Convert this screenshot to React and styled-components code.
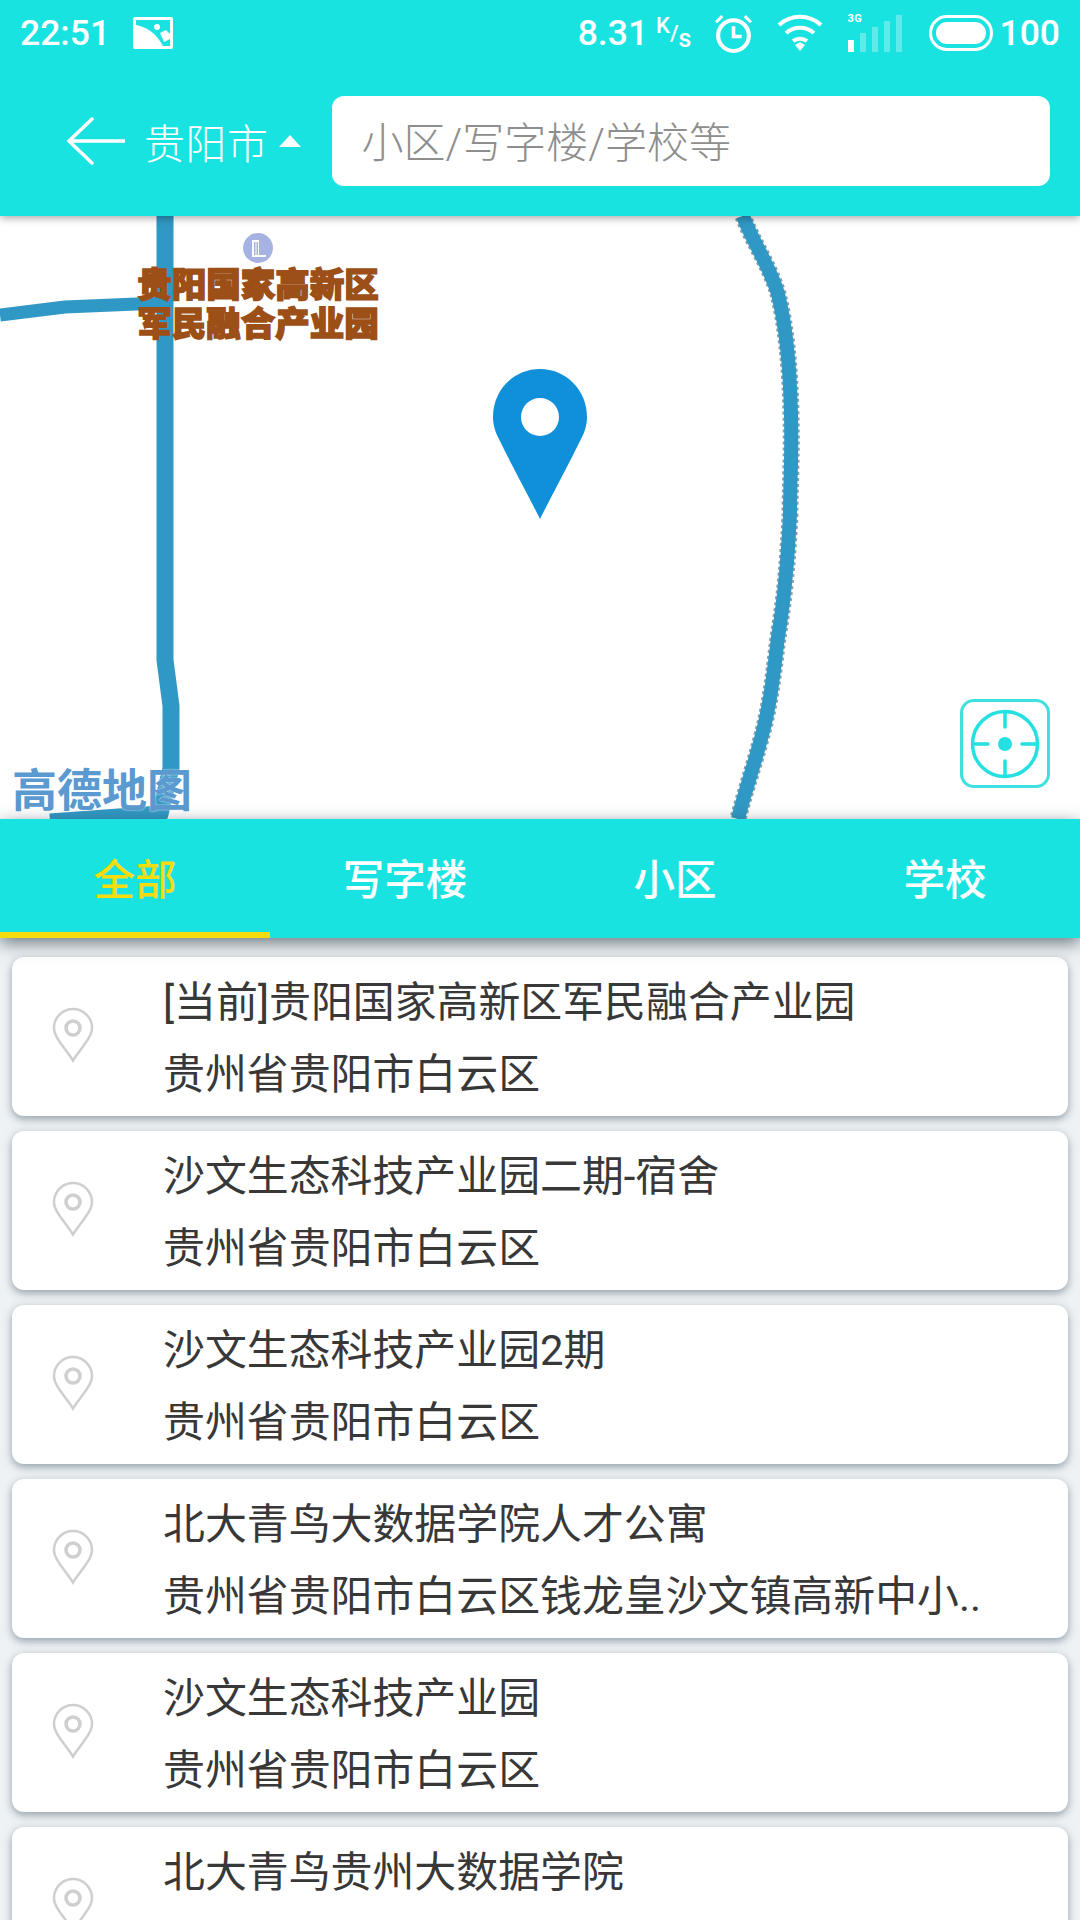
import React from "react";
import styled, { createGlobalStyle } from "styled-components";

const Global = createGlobalStyle`
  html, body { margin: 0; padding: 0; background: #fff; }
  * { box-sizing: border-box; }
  body { font-family: Roboto, "Noto Sans CJK SC", sans-serif; }
`;

const Page = styled.div`
  width: 1080px;
  height: 1920px;
  overflow: hidden;
  display: flex;
  flex-direction: column;
  background: #eef2f4;
`;

const Header = styled.header`
  position: relative;
  z-index: 3;
  flex: none;
  height: 216px;
  background: #19e3e0;
  box-shadow: 0 2px 8px rgba(0, 0, 0, 0.35);
`;

const StatusBar = styled.div`
  height: 66px;
  padding: 0 20px 0 20px;
  display: flex;
  align-items: center;
  justify-content: space-between;
  color: #fff;
  font-size: 35.5px;
`;

const StatusGroup = styled.div`
  display: flex;
  align-items: center;
`;

const Time = styled.span`
  margin-right: 23px;
  font-weight: 500;
`;

const Speed = styled.span`
  font-weight: 500;
  margin-right: 22px;
`;

const SpeedUnit = styled.span`
  display: inline-flex;
  align-items: center;
  margin: 0 22px 0 -14px;
  font-size: 22px;
  font-weight: 500;
  height: 40px;
`;

const Sup = styled.span`
  align-self: flex-start;
`;

const Sub = styled.span`
  align-self: flex-end;
  font-size: 25px;
`;

const IconGap = styled.span`
  width: ${(p) => p.$w}px;
`;

const SignalWrap = styled.div`
  position: relative;
  width: 55px;
  height: 40px;
  margin: 0 27px 0 24px;
`;

const SignalLabel = styled.span`
  position: absolute;
  left: 0;
  top: -1px;
  font-size: 11px;
  font-weight: 700;
  letter-spacing: 0.5px;
`;

const Battery = styled.span`
  font-weight: 500;
  margin-left: 6px;
`;

const Toolbar = styled.div`
  height: 90px;
  margin-top: 30px;
  padding: 0 30px 0 67px;
  display: flex;
  align-items: center;
  color: #fff;
`;

const City = styled.span`
  margin-left: 19px;
  font-size: 41px;
  font-weight: 300;
  letter-spacing: 0.5px;
`;

const Caret = styled.span`
  width: 0;
  height: 0;
  margin: 0 31px 0 10px;
  border-left: 11px solid transparent;
  border-right: 11px solid transparent;
  border-bottom: 12px solid #fff;
`;

const Search = styled.div`
  flex: 1;
  height: 90px;
  padding: 0 0 4px 30px;
  display: flex;
  align-items: center;
  background: #fff;
  border-radius: 12px;
  color: #8e8e8e;
  font-size: 42px;
  font-weight: 300;
`;

const MapArea = styled.div`
  position: relative;
  flex: none;
  height: 603px;
  background: #fff;
  overflow: hidden;
`;

const Roads = styled.svg`
  position: absolute;
  inset: 0;
`;

const PoiLabel = styled.div`
  position: absolute;
  left: 137px;
  top: 50px;
  width: 242px;
  color: #9c4f16;
  font-size: 34.5px;
  line-height: 39px;
  font-weight: 900;
  text-align: center;
  -webkit-text-stroke: 1.5px #9c4f16;
`;

const PoiDot = styled.svg`
  position: absolute;
  left: 243px;
  top: 17px;
`;

const Marker = styled.svg`
  position: absolute;
  left: 493px;
  top: 153px;
`;

const LocateButton = styled.div`
  position: absolute;
  left: 960px;
  top: 483px;
  width: 90px;
  height: 89px;
  display: flex;
  align-items: center;
  justify-content: center;
  background: #fff;
  border: 3px solid #3fe0e0;
  border-radius: 14px;
`;

const MapLogo = styled.div`
  position: absolute;
  left: 12px;
  top: 548px;
  color: #5b9ad0;
  font-size: 45px;
  line-height: 56px;
  font-weight: 700;
  text-shadow: 0 0 2px #fff;
`;

const Tabs = styled.nav`
  position: relative;
  z-index: 2;
  flex: none;
  height: 119px;
  display: grid;
  grid-template-columns: repeat(4, 1fr);
  background: #19e3e0;
  box-shadow: 0 5px 16px rgba(50, 70, 80, 0.7);
`;

const Tab = styled.div`
  display: flex;
  align-items: center;
  justify-content: center;
  padding-top: 2px;
  font-size: 41.5px;
  font-weight: 500;
  color: ${(p) => (p.$active ? "#f5dc0c" : "#fff")};
  border-bottom: 6px solid ${(p) => (p.$active ? "#f5dc0c" : "transparent")};
`;

const List = styled.div`
  padding: 19px 12px 0;
  display: flex;
  flex-direction: column;
  gap: 15px;
`;

const Card = styled.div`
  flex: none;
  height: 159px;
  padding-left: 40px;
  display: flex;
  align-items: center;
  background: #fff;
  border-radius: 12px;
  box-shadow: 0 3px 8px rgba(70, 90, 105, 0.55);
`;

const PinSlot = styled.div`
  display: flex;
  margin-top: -4px;
`;

const CardText = styled.div`
  margin-left: 69px;
  padding-top: 4px;
  font-size: 41.9px;
  line-height: 72px;
  font-weight: 400;
  color: #383838;
  white-space: nowrap;
`;

const places = [
  ["[当前]贵阳国家高新区军民融合产业园", "贵州省贵阳市白云区"],
  ["沙文生态科技产业园二期-宿舍", "贵州省贵阳市白云区"],
  ["沙文生态科技产业园2期", "贵州省贵阳市白云区"],
  ["北大青鸟大数据学院人才公寓", "贵州省贵阳市白云区钱龙皇沙文镇高新中小.."],
  ["沙文生态科技产业园", "贵州省贵阳市白云区"],
  ["北大青鸟贵州大数据学院", "贵州省贵阳市白云区"],
];

const tabs = ["全部", "写字楼", "小区", "学校"];

const PinOutline = () => (
  <svg width="42" height="56" viewBox="0 0 42 56" fill="none" stroke="#cfcfcf" strokeWidth="2.5">
    <path d="M21 53.5C14 42 2 31 2 21a19 19 0 0 1 38 0c0 10-12 21-19 32.5z" />
    <circle cx="21" cy="21" r="7" strokeWidth="3.5" />
  </svg>
);

const PhotoIcon = () => (
  <svg width="40" height="32" viewBox="0 0 40 32">
    <rect width="40" height="32" rx="2" fill="#fff" />
    <path d="M3 3H37V29H30C24 17 14 10 3 8Z" fill="#19e3e0" />
    <path d="M27 16L33 13 37 17V22L31 25Z" fill="#fff" />
    <circle cx="24" cy="10" r="3" fill="#fff" />
  </svg>
);

const AlarmIcon = () => (
  <svg width="41" height="41" viewBox="0 0 40 40" fill="none" stroke="#fff">
    <circle cx="20" cy="22" r="15" strokeWidth="4" />
    <path d="M20 13v10h8" strokeWidth="3.5" />
    <path d="M3 9l6-6M37 9l-6-6" strokeWidth="3" />
  </svg>
);

const WifiIcon = () => (
  <svg width="46" height="38" viewBox="0 0 46 38" fill="none" stroke="#fff" strokeWidth="4">
    <path d="M2 11c12-11 30-11 42 0" />
    <path d="M9 19c8-7 20-7 28 0" />
    <path d="M16 27c4-3 10-3 14 0" />
    <path d="M18 31l5-3 5 3-5 6z" fill="#fff" stroke="none" />
  </svg>
);

const SignalBars = () => (
  <svg width="55" height="40" viewBox="0 0 55 40">
    <rect x="1" y="27" width="6" height="12" fill="#fff" />
    <rect x="13" y="20" width="6" height="19" fill="#fff" opacity="0.3" />
    <rect x="25" y="14" width="6" height="25" fill="#fff" opacity="0.3" />
    <rect x="37" y="8" width="6" height="31" fill="#fff" opacity="0.3" />
    <rect x="49" y="2" width="6" height="37" fill="#fff" opacity="0.3" />
  </svg>
);

const BatteryIcon = () => (
  <svg width="64" height="36" viewBox="0 0 64 36">
    <rect x="1.5" y="1.5" width="61" height="33" rx="16.5" fill="none" stroke="#fff" strokeWidth="3" />
    <rect x="7" y="7" width="50" height="22" rx="11" fill="#fff" />
  </svg>
);

const BackArrow = () => (
  <svg width="58" height="48" viewBox="0 0 58 48" fill="none" stroke="#fff" strokeWidth="3.5" strokeLinecap="round">
    <path d="M25 2L2 24l23 22M2 24h55" />
  </svg>
);

const LocateIcon = () => (
  <svg width="70" height="70" viewBox="0 0 70 70" fill="none" stroke="#25e0e0" strokeWidth="3.5">
    <circle cx="35" cy="35" r="32.5" />
    <circle cx="35" cy="35" r="7" fill="#25e0e0" stroke="none" />
    <path d="M35 3v15M35 52v15M3 35h15M52 35h15" strokeLinecap="round" />
  </svg>
);

const rightRoad = "M743 0C752 25 770 50 778 78C786 110 790 150 791 198C792 240 790 270 790 298C788 340 785 380 778 421C774 455 770 490 762 519C754 550 745 575 738 603";

export default function App() {
  return (
    <Page>
      <Global />
      <Header>
        <StatusBar>
          <StatusGroup>
            <Time>22:51</Time>
            <PhotoIcon />
          </StatusGroup>
          <StatusGroup>
            <Speed>8.31</Speed>
            <SpeedUnit>
              <Sup>K</Sup>/<Sub>s</Sub>
            </SpeedUnit>
            <AlarmIcon />
            <IconGap $w={23} />
            <WifiIcon />
            <SignalWrap>
              <SignalLabel>3G</SignalLabel>
              <SignalBars />
            </SignalWrap>
            <BatteryIcon />
            <Battery>100</Battery>
          </StatusGroup>
        </StatusBar>
        <Toolbar>
          <BackArrow />
          <City>贵阳市</City>
          <Caret />
          <Search>小区/写字楼/学校等</Search>
        </Toolbar>
      </Header>

      <MapArea>
        <Roads width="1080" height="603" viewBox="0 0 1080 603" fill="none">
          <path d={rightRoad} stroke="#8aa0ac" strokeWidth="17" strokeDasharray="3 3" />
          <g stroke="#3098c4" strokeLinejoin="round">
            <path d="M0 99L65 91L160 87" strokeWidth="13" />
            <path d="M165 0V444L171 490V552L160 598L50 606" strokeWidth="17" />
            <path d={rightRoad} strokeWidth="14" />
          </g>
        </Roads>
        <PoiDot width="30" height="30" viewBox="0 0 30 30">
          <circle cx="15" cy="15" r="15" fill="#a6b2e2" />
          <path d="M9 7h7v15h7v2H9z" fill="#fff" />
          <path d="M11 9h1.500v13H11zM13.500 9H15v13h-1.500z" fill="#a6b2e2" />
        </PoiDot>
        <PoiLabel>
          贵阳国家高新区
          <br />
          军民融合产业园
        </PoiLabel>
        <Marker width="94" height="150" viewBox="0 0 94 150">
          <path
            fillRule="evenodd"
            d="M47 0c26 0 47 21 47 48 0 9-3 17-7 24-12 25-27 52-40 78C34 124 19 97 7 72c-4-7-7-15-7-24C0 21 21 0 47 0zM47 29a19 19 0 1 0 0 38 19 19 0 0 0 0-38z"
            fill="#1090d8"
          />
        </Marker>
        <LocateButton>
          <LocateIcon />
        </LocateButton>
        <MapLogo>高德地图</MapLogo>
      </MapArea>

      <Tabs>
        {tabs.map((t, i) => (
          <Tab key={t} $active={i === 0}>
            {t}
          </Tab>
        ))}
      </Tabs>

      <List>
        {places.map(([title, address]) => (
          <Card key={title}>
            <PinSlot>
              <PinOutline />
            </PinSlot>
            <CardText>
              <div>{title}</div>
              <div>{address}</div>
            </CardText>
          </Card>
        ))}
      </List>
    </Page>
  );
}
